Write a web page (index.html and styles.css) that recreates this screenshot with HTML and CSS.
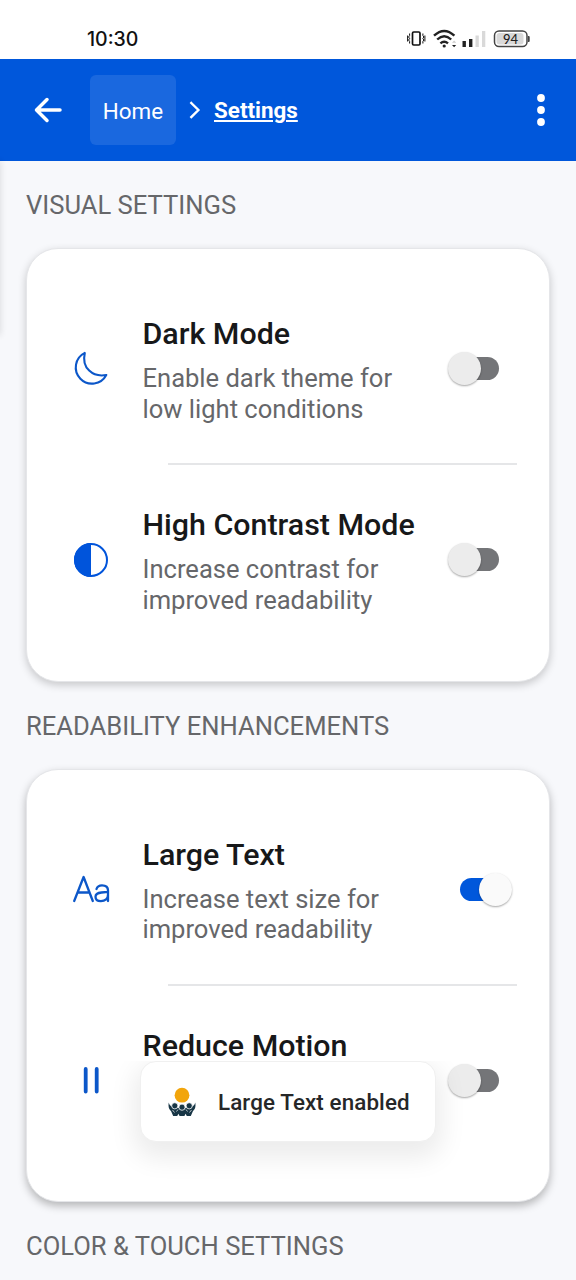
FILE: index.html
```html
<!DOCTYPE html>
<html lang="en">
<head>
<meta charset="utf-8">
<title>Settings</title>
<link rel="stylesheet" href="styles.css">
</head>
<body>
<div class="screen">
  <header class="status">
    <span class="clock">10:30</span>
    <svg class="status-icons" width="126" height="24" viewBox="0 0 126 24">
      <rect x="6.500" y="5" width="7.500" height="13" rx="1.200" fill="none" stroke="#111" stroke-width="1.700"/>
      <path d="M3.600 6.500v2l-1 1.500 1 1.500-1 1.500 1 1.500v2M16.900 6.500v2l1 1.500-1 1.500 1 1.500-1 1.500v2M1.600 8.500v6M18.900 8.500v6" fill="none" stroke="#111" stroke-width="1"/>
      <g fill="none" stroke="#222" stroke-width="2.400"><path d="M28 8.700Q38.200-.9 48.400 8.700"/><path d="M31.200 12.500Q38.200 5.900 45.200 12.500"/><path d="M34.400 16.300Q38.200 13.100 42 16.300"/></g>
      <circle cx="38.200" cy="19" r="1.600" fill="#222"/>
      <path d="M46 15.700l2.100-2.200 2.100 2.200z" fill="#ccc"/><path d="M46 18l2.100 2.300 2.100-2.300z" fill="#222"/>
      <path d="M56.500 14h3.400v6h-3.400zM63 12h3.400v8H63z" fill="#222"/>
      <path d="M69.500 8.500h3.300V20h-3.300zM76 4h3.300v16H76z" fill="#d9d9d9"/>
      <rect x="88.500" y="4" width="32.500" height="15.600" rx="4.500" fill="#fff" stroke="#444" stroke-width="1.500"/>
      <rect x="90.500" y="6" width="27" height="11.600" rx="3" fill="#d9d9d9"/>
      <path d="M122 9h.7q1 0 1 1v4q0 1-1 1h-.7z" fill="#444"/>
      <text class="battery-text" x="104.500" y="16.500" text-anchor="middle">94</text>
    </svg>
  </header>

  <nav class="appbar">
    <svg class="back" width="28" height="28" viewBox="0 0 28 28"><path d="M13 3.500L2.500 14 13 24.500M2.500 14H26" fill="none" stroke="#fff" stroke-width="3.500" stroke-linecap="round" stroke-linejoin="round"/></svg>
    <span class="crumb-home">Home</span>
    <svg class="chevron" width="12" height="18" viewBox="0 0 12 18"><path d="M2.300 2L9.400 9l-7.100 7" fill="none" stroke="#fff" stroke-width="2.400" stroke-linecap="square"/></svg>
    <span class="crumb-current">Settings</span>
    <svg class="more" width="8" height="34" viewBox="0 0 8 34" fill="#fff"><circle cx="4" cy="5" r="3.900"/><circle cx="4" cy="17" r="3.900"/><circle cx="4" cy="29" r="3.900"/></svg>
  </nav>

  <main class="content">
    <div class="edge-shadow"></div>
    <h2 class="section-title">VISUAL SETTINGS</h2>
    <section class="card">
      <div class="row">
        <svg class="icon" width="38" height="38" viewBox="0 0 38 38"><path d="M13.500 2.900A16.200 16.200 0 1 0 35 25C21.500 27.500 10 18 13.500 2.900z" fill="none" stroke="#0c57c9" stroke-width="2.100" stroke-linejoin="round" transform="translate(-.7 0)"/></svg>
        <div class="copy"><h3 class="name">Dark Mode</h3><p class="desc">Enable dark theme for<br>low light conditions</p></div>
        <span class="switch"><span class="thumb"></span></span>
      </div>
      <div class="divider"></div>
      <div class="row">
        <svg class="icon" width="38" height="38" viewBox="0 0 38 38"><circle cx="19" cy="19" r="16" fill="#fff" stroke="#0054db" stroke-width="2"/><path d="M19 2a17 17 0 0 0 0 34z" fill="#0054db"/></svg>
        <div class="copy"><h3 class="name">High Contrast Mode</h3><p class="desc">Increase contrast for<br>improved readability</p></div>
        <span class="switch"><span class="thumb"></span></span>
      </div>
    </section>

    <h2 class="section-title">READABILITY ENHANCEMENTS</h2>
    <section class="card deep">
      <div class="row">
        <svg class="icon" width="38" height="38" viewBox="0 0 38 38" fill="none" stroke="#0c57c9" stroke-width="2.300" stroke-linecap="round" stroke-linejoin="round"><path d="M2.200 31L11.600 7l9.200 24M5.700 22.500h11.800"/><path d="M24.500 19c.8-2.600 2.800-3.700 5.500-3.700 3.800 0 6 1.800 6 5V31M36 21.800l-6.500.7c-4 .4-6 1.600-6 4.200s2 4.400 5.400 4.400c4.200 0 7.100-2.700 7.100-6.300"/></svg>
        <div class="copy"><h3 class="name">Large Text</h3><p class="desc">Increase text size for<br>improved readability</p></div>
        <span class="switch on"><span class="thumb"></span></span>
      </div>
      <div class="divider"></div>
      <div class="row">
        <svg class="icon" width="38" height="38" viewBox="0 0 38 38"><path d="M13.700 8v22.500M24.700 8v22.500" stroke="#0c57c9" stroke-width="3.800" stroke-linecap="round"/></svg>
        <div class="copy"><h3 class="name">Reduce Motion</h3></div>
        <span class="switch"><span class="thumb"></span></span>
      </div>
    </section>
    <h2 class="section-title">COLOR &amp; TOUCH SETTINGS</h2>
  </main>

  <div class="toast">
    <svg class="logo" width="28" height="30" viewBox="0 0 28 30">
      <circle cx="14" cy="8.200" r="7.400" fill="#f2a50c"/>
      <path d="M.8 15.500C1.500 19 4 20.400 8 20.600c3 0 4 1.900 6 1.900s3-1.900 6-1.900c4-.2 6.500-1.600 7.200-5.100.9 4.500-.4 7-2.200 8.500L22.800 29H5.200L3 24C1.200 22.500-.1 20 .8 15.500z" fill="#183646"/>
      <path d="M9.200 29l1.200-2.200 1.200 2.200zM16.400 29l1.200-2.200 1.200 2.200z" fill="#fff"/>
      <path d="M4.500 23l2 2.500M23.500 23l-2 2.500M10 22.500l-1.500 2M18 22.500l1.500 2" stroke="#fff" stroke-width=".7"/>
      <g fill="#183646" stroke="#fff" stroke-width=".8"><circle cx="6.800" cy="18.800" r="3.100"/><circle cx="14" cy="20.200" r="3.100"/><circle cx="21.200" cy="18.800" r="3.100"/></g>
    </svg>
    <span class="toast-text">Large Text enabled</span>
  </div>
</div>
</body>
</html>
```
FILE: styles.css
```css
* { box-sizing: border-box; }
body { margin: 0; font-family: Roboto, "Noto Sans", sans-serif; }
.screen { position: relative; width: 576px; height: 1280px; overflow: hidden; background: #f7f8fb; }
.status { height: 59px; padding: 18px 44px 0 87px; background: #fff; display: flex; justify-content: space-between; align-items: flex-start; }
.clock { font: 500 19.500px/42px Inter, sans-serif; height: 42px; color: #111; }
.status-icons { margin-top: 9px; }
.battery-text { font: 500 13px Lato, sans-serif; fill: #222; }
.appbar { height: 102px; padding: 0 31px 0 34px; display: flex; align-items: center; background: #0057db; color: #fff; }
.crumb-home { width: 86px; height: 70px; margin-left: 28px; border-radius: 6px; background: #1a68df; text-align: center; font-size: 22.400px; line-height: 72px; }
.chevron { margin-left: 13px; }
.crumb-current { margin-left: 13px; font-size: 22.400px; font-weight: 700; line-height: 72px; text-decoration: underline; text-decoration-thickness: 1.500px; text-underline-offset: 2px; }
.more { margin-left: auto; }
.content { position: relative; padding: 0 26px; }
.edge-shadow { position: absolute; left: -6px; top: 0; width: 6px; height: 174px; box-shadow: 0 0 7px rgba(0, 0, 0, .14); }
.section-title { margin: 0; height: 87px; font-size: 25.600px; line-height: 89px; font-weight: 400; color: #66676a; white-space: nowrap; }
.card { height: 433.500px; padding: 25px 32px 0; border-radius: 32px; border: 1px solid #e5e6e9; background: #fff; box-shadow: 0 3px 8px rgba(0, 0, 0, .2); }
.card.deep { box-shadow: 0 4px 9px rgba(0, 0, 0, .27); }
.row { height: 189px; padding-left: 13px; display: flex; align-items: center; }
.icon { flex: none; }
.copy { flex: 1; margin-left: 32.500px; height: 107px; white-space: nowrap; }
.name { margin: 0; font-size: 30.400px; line-height: 38px; font-weight: 500; color: #171819; }
.desc { margin: 10px 0 0; font-size: 25.550px; line-height: 30.500px; color: #66676a; }
.divider { height: 2px; margin-left: 109px; background: #e5e6e8; }
.switch { position: relative; flex: none; width: 38px; height: 23px; margin-right: 18px; border-radius: 12px; background: #747578; }
.thumb { position: absolute; left: -13px; top: -5px; width: 33px; height: 33px; border-radius: 50%; background: #ececec; box-shadow: 0 1px 2px rgba(0, 0, 0, .35); }
.switch.on { background: #0057db; margin-right: 19px; }
.switch.on .thumb { left: 19px; background: #fafafa; }
.toast { position: absolute; left: 140px; top: 1061px; width: 296px; height: 81px; padding-left: 27px; border-radius: 16px; border: 1px solid #f0f0f0; background: #fff; display: flex; align-items: center; box-shadow: 0 10px 26px 6px rgba(0, 0, 0, .08); clip-path: inset(0 -50px -50px -50px); }
.toast-text { margin-left: 22px; font-size: 22.400px; font-weight: 500; letter-spacing: .1px; line-height: 28px; padding-top: 1px; color: #262728; white-space: nowrap; }
```
